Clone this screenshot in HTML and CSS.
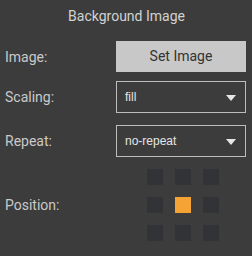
FILE: index.html
```html
<!DOCTYPE html>
<html>
	<head>
		<meta charset="utf-8" />
		<title>Background Image</title>
		<link rel="stylesheet" href="styles.css">
	</head>
	<body>
		<div class="panel">
			<h1 class="titulo">Background Image</h1>
			<div class="fila fila-corta">
				<span class="etiqueta">Image:</span>
				<div class="boton">Set Image</div>
			</div>
			<div class="fila fila-corta">
				<span class="etiqueta">Scaling:</span>
				<div class="lista">fill<span class="flecha"></span></div>
			</div>
			<div class="fila">
				<span class="etiqueta">Repeat:</span>
				<div class="lista">no-repeat<span class="flecha"></span></div>
			</div>
			<div class="fila">
				<span class="etiqueta">Position:</span>
				<div class="rejilla">
					<span class="celda"></span>
					<span class="celda"></span>
					<span class="celda"></span>
					<span class="celda"></span>
					<span class="celda activa"></span>
					<span class="celda"></span>
					<span class="celda"></span>
					<span class="celda"></span>
					<span class="celda"></span>
				</div>
			</div>
		</div>
	</body>
</html>
```

FILE: styles.css
```css
* {
	margin: 0;
	padding: 0;
	box-sizing: border-box;
}
body {
	background-color: #3c3c3c;
	font-family: Roboto, "Noto Sans", sans-serif;
	color: #c9c9c9;
}

.panel {
	width: 252px;
	height: 256px;
	padding: 0 6px 0 5px;
}

.titulo {
	font-size: 14px;
	font-weight: normal;
	color: #d2d2d2;
	text-align: center;
	line-height: 32px;
	height: 32px;
	padding-left: 2px;
}

.fila {
	display: flex;
	align-items: center;
	margin-top: 12px;
}
.fila-corta {
	margin-top: 9px;
}

.etiqueta {
	width: 111px;
	font-size: 14px;
}

.boton {
	width: 130px;
	height: 31px;
	line-height: 31px;
	background-color: #c8c8c8;
	color: #333333;
	text-align: center;
	font-size: 14px;
}

/* desplegables */
.lista {
	position: relative;
	width: 130px;
	height: 32px;
	line-height: 30px;
	border: 1px solid #bdbdbd;
	padding-left: 8px;
	font-family: "Liberation Sans", Arial, sans-serif;
	font-size: 12px;
	color: #e6e6e6;
}
.flecha {
	position: absolute;
	right: 9px;
	top: 13px;
	border-left: 5px solid transparent;
	border-right: 5px solid transparent;
	border-top: 6px solid #e6e6e6;
}

.rejilla {
	display: grid;
	grid-template-columns: repeat(3, 16px);
	grid-auto-rows: 16px;
	gap: 12px;
	margin-left: 31px;
}
.celda {
	background-color: #323337;
}
.celda.activa {
	background-color: #f4a334;
}
```
